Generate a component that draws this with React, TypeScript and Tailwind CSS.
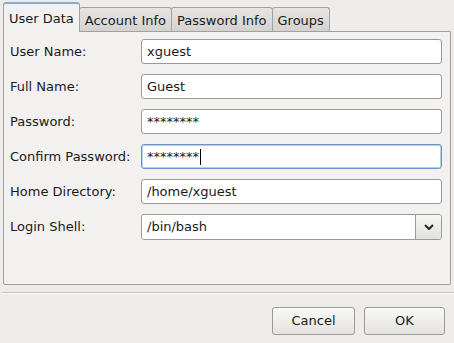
import { useState } from 'react'

const rows = [
  { label: 'User Name:', value: 'xguest' },
  { label: 'Full Name:', value: 'Guest' },
  { label: 'Password:', value: '********' },
  { label: 'Confirm Password:', value: '********', focused: true },
  { label: 'Home Directory:', value: '/home/xguest' },
]

const tabs = ['User Data', 'Account Info', 'Password Info', 'Groups']

function App() {
  const [active] = useState(0)

  return (
    <div className="w-[454px] h-[343px] bg-[#edeceb] text-[#1a1a1a] text-[13px] overflow-hidden relative" style={{ fontFamily: '"DejaVu Sans", sans-serif' }}>
      <div className="flex items-end h-[31px] pl-[3px]">
        {tabs.map((t, i) =>
          i === active ? (
            <div key={t} className="relative z-10 h-[30px] -mb-px px-[5px] pt-[5px] bg-[#f2f1f0] border border-b-0 border-[#a0a0a0] rounded-t-[3px] border-t-2 border-t-[#8aa9d1]">
              {t}
            </div>
          ) : (
            <div key={t} className="h-[24px] px-[5px] pt-[3px] bg-gradient-to-b from-[#e6e5e3] to-[#d3d2cf] border border-b-0 border-[#a3a3a0] rounded-t-[3px] -ml-px first:ml-0">
              {t}
            </div>
          )
        )}
      </div>

      <div className="mx-[3px] h-[254px] bg-[#f2f1f0] border border-[#a0a0a0] rounded-b-[2px] pt-[7px] pl-[6px] pr-[8px]">
        <div className="flex flex-col gap-[10px]">
          {rows.map(r => (
            <div key={r.label} className="flex items-center h-[25px]">
              <div className="w-[131px]">{r.label}</div>
              <div className={`flex-1 h-[25px] flex items-center pl-[5px] bg-white rounded-[3px] border ${r.focused ? 'border-[#6f94c4] shadow-[inset_0_0_0_1px_#b9cde7]' : 'border-[#9a9a98]'}`}>
                <span>{r.value}</span>
                {r.focused && <span className="w-px h-[16px] bg-black ml-px" />}
              </div>
            </div>
          ))}
          <div className="flex items-center h-[26px]">
            <div className="w-[131px]">Login Shell:</div>
            <div className="flex-1 h-[26px] flex border border-[#9a9a98] rounded-[3px] overflow-hidden">
              <div className="flex-1 bg-white flex items-center pl-[5px] border-r border-[#9a9a98]">/bin/bash</div>
              <div className="w-[25px] bg-gradient-to-b from-[#f6f6f5] to-[#e2e1df] flex items-center justify-center">
                <svg width="10" height="6" viewBox="0 0 10 6">
                  <path d="M1 1 L5 5 L9 1" stroke="#222" strokeWidth="2" fill="none" />
                </svg>
              </div>
            </div>
          </div>
        </div>
      </div>

      <div className="mt-[7px] ml-[2px] h-[2px] border-t border-[#c2c1bf] border-b border-b-white" />

      <div className="flex justify-end gap-[9px] pr-[9px] mt-[13px]">
        <button className="w-[83px] h-[28px] rounded-[3px] border border-[#9a9a98] bg-gradient-to-b from-[#f8f8f7] to-[#e4e3e1]">Cancel</button>
        <button className="w-[81px] h-[28px] rounded-[3px] border border-[#9a9a98] bg-gradient-to-b from-[#f8f8f7] to-[#e4e3e1]">OK</button>
      </div>
    </div>
  )
}

export default App
